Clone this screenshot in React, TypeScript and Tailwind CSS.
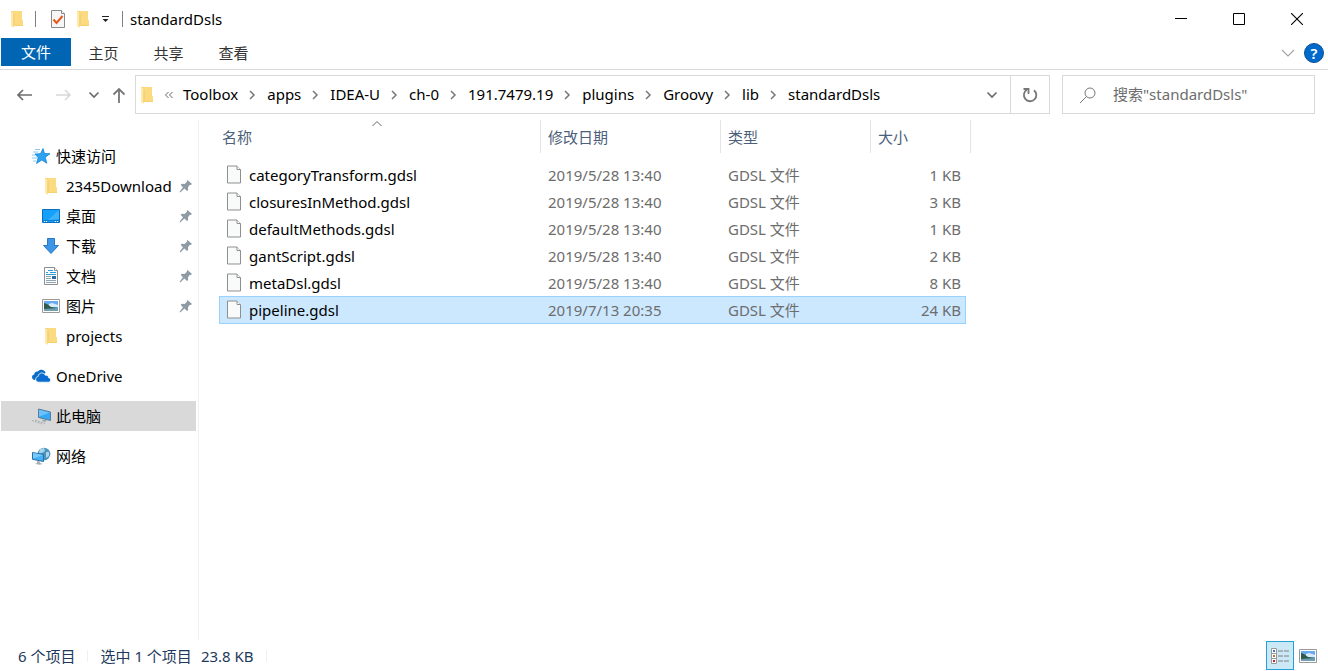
import { ReactNode } from 'react'
import clsx from 'clsx'

const FolderIcon = () => {
  return (
    <svg width="14" height="18" viewBox="0 0 14 18" className="shrink-0">
      <path d="M1 1h11v9l1 1v5H1z" fill="#f5d06c" />
      <path d="M4 1h8v9l1 1v4H4z" fill="#fbda80" />
      <path d="M1 1l3.500 2v12L3.500 18 1 16z" fill="#ffe8a8" />
      <path d="M4.500 3.500v11l-1 2.500V3z" fill="#eec25a" />
    </svg>
  )
}

const FileIcon = () => {
  return (
    <svg width="16" height="20" viewBox="0 0 16 20" className="shrink-0">
      <path d="M1.500 1h9.500l3.500 3.500v13.500h-13z" fill="#f9fafa" stroke="#8f8f8f" />
      <path d="M11 1v3.500h3.500" fill="#fff" stroke="#8f8f8f" />
    </svg>
  )
}

const CheckIcon = () => {
  return (
    <svg width="16" height="20" viewBox="0 0 16 20">
      <path d="M1.500 1.500h10l3 3v14h-13z" fill="#f6f6f6" stroke="#8a8a8a" />
      <path d="M11.500 1.500v3h3" fill="#fff" stroke="#8a8a8a" />
      <path d="M3.500 10.500l3 3.500L12.500 7" fill="none" stroke="#e8571c" strokeWidth="2" />
    </svg>
  )
}

const PinIcon = () => {
  return (
    <svg width="14" height="14" viewBox="0 0 14 14" className="shrink-0">
      <path
        d="M8.500 1l4.500 4-1.200 1-.9-.2L9 8.300l.2 2.700-1.200 1-2.600-2.400L1.300 13.400l-.7-.7L4 8.200 1.700 6l1-1.200 2.900.1L8 2.800 7.700 2z"
        fill="#8e9aa4"
      />
    </svg>
  )
}

const StarIcon = () => {
  return (
    <svg width="20" height="18" viewBox="0 0 20 18">
      <path
        d="M12 1.500l1.500 5 5.500.2-4.700 3.500 1.500 6-5-3.200-5.300 3.500 1.700-5.800-3.200-3.700 5.500-.3z"
        fill="#2ea3f2"
        stroke="#1583d1"
        strokeWidth=".8"
      />
      <path d="M4 2.500h5M2 5h5M1 8h3M1 11h5M2 14h3" stroke="#8cc8f3" />
    </svg>
  )
}

const DesktopIcon = () => {
  return (
    <svg width="18" height="14" viewBox="0 0 18 14">
      <path d="M.5.5h17v13H.5z" fill="#14a0fb" stroke="#0a6fc0" />
      <path d="M17 1v9L6 11z" fill="#3fb2fd" />
      <path d="M1 11.500h16" stroke="#0f7fd4" />
      <path d="M2 12.500h1M4 12.500h1M13 12.500h1M15 12.500h1" stroke="#fff" />
    </svg>
  )
}

const DownloadIcon = () => {
  return (
    <svg width="18" height="18" viewBox="0 0 18 18">
      <path d="M5.500 1.500h7v7h4L9 16.500 1.500 8.500h4z" fill="#3c95e6" stroke="#2b78c4" />
    </svg>
  )
}

const DocumentIcon = () => {
  return (
    <svg width="16" height="20" viewBox="0 0 16 20">
      <path d="M1.500 1.500h10l3 3v14h-13z" fill="#fdfdfd" stroke="#8d8d8d" />
      <path d="M11.500 1.500v3h3" fill="#fff" stroke="#8d8d8d" />
      <path d="M5 4.500h5M3 6.500h2M7 6.500h6M3 8.500h10" stroke="#2f9be0" />
      <path d="M3 10.500h5M3 12.500h5M3 14.500h10M3 16.500h10" stroke="#8ea3b3" />
      <path d="M9 10h4v3H9z" fill="#2c6ca4" />
    </svg>
  )
}

const PictureIcon = () => {
  return (
    <svg width="18" height="14" viewBox="0 0 18 14">
      <path d="M.5.5h17v13H.5z" fill="#fff" stroke="#9a9a9a" />
      <path d="M2 2h14v10H2z" fill="#6aaaf0" />
      <path d="M7 5l3-1 6 2v2H7z" fill="#d8ebfa" />
      <path d="M2 4l3 1 4 3 7 1v1H2z" fill="#2f5a4c" />
      <path d="M2 10l14-1v3H2z" fill="#6f9fb0" />
    </svg>
  )
}

const OneDriveIcon = () => {
  return (
    <svg width="20" height="14" viewBox="0 0 20 14">
      <path
        d="M3.500 11A3 3 0 0 1 1 8.200C1 6.500 2 5.600 3.300 5.400 3.500 3.300 5 2.300 6.800 2.600 8 .8 9.500.5 11 .7c1.900.3 3.100 1.500 3.500 3.300z"
        fill="#0a6cc4"
      />
      <path
        d="M8 13.200c-2 0-3.300-1.100-3.300-2.900 0-1.600 1-2.600 2.400-2.800C7.300 5.200 8.800 4 10.800 4c1.600 0 2.900.8 3.500 2.200 2-.3 3.300.9 3.300 2.500 1.300.3 2 1.100 2 2.300 0 1.300-.9 2.200-2.200 2.200z"
        fill="#0a6cd0"
        stroke="#fff"
        strokeWidth=".8"
      />
    </svg>
  )
}

const ComputerIcon = () => {
  return (
    <svg width="20" height="18" viewBox="0 0 20 18">
      <path d="M7.500 2l12 3v8.500l-12-3z" fill="#35a8f5" stroke="#5b7f99" />
      <path d="M8 2.800l10.500 2.900L8 9.500z" fill="#6cc3fb" />
      <path d="M12 12.500l4 1-2 1.500-3-1z" fill="#9aa5ad" />
      <path d="M1 13.500l10 3.500M4 13l10 3.500" stroke="#a5adb3" strokeDasharray="2 1" />
    </svg>
  )
}

const NetworkIcon = () => {
  return (
    <svg width="20" height="18" viewBox="0 0 20 18">
      <circle cx="13" cy="7" r="6.300" fill="#4d94bd" />
      <path d="M9 2l4-1 1 3-3 2-3 0zM15 5l3 0v4l-3 2z" fill="#a9d6e6" />
      <path d="M1.500 5.500l11 2v7l-11-2.200z" fill="#45b1f7" stroke="#2a6fa3" />
      <path d="M2 6l10 2-10 3.500z" fill="#78cafc" />
      <path d="M6 14l3 .6v1.400l3 1-4 .8-4-1 2-.8z" fill="#a7b0b6" />
    </svg>
  )
}

const ChevronRight = () => {
  return (
    <svg width="12" height="12" viewBox="0 0 12 12" className="mr-[9px] ml-2">
      <path d="M4 2l4 4-4 4" fill="none" stroke="#777" strokeWidth="1.500" />
    </svg>
  )
}

const ChevronDown = () => {
  return (
    <svg width="12" height="8" viewBox="0 0 12 8">
      <path d="M1.500 1.500L6 6l4.500-4.500" fill="none" stroke="#6d6d6d" strokeWidth="1.700" />
    </svg>
  )
}

const tabs = ['主页', '共享', '查看']

const crumbs = [
  'Toolbox',
  'apps',
  'IDEA-U',
  'ch-0',
  '191.7479.19',
  'plugins',
  'Groovy',
  'lib',
  'standardDsls'
]

const quickAccess = [
  { name: '2345Download', icon: <FolderIcon />, pinned: true },
  { name: '桌面', icon: <DesktopIcon />, pinned: true },
  { name: '下载', icon: <DownloadIcon />, pinned: true },
  { name: '文档', icon: <DocumentIcon />, pinned: true },
  { name: '图片', icon: <PictureIcon />, pinned: true },
  { name: 'projects', icon: <FolderIcon />, pinned: false }
]

const files = [
  { name: 'categoryTransform.gdsl', date: '2019/5/28 13:40', size: '1 KB' },
  { name: 'closuresInMethod.gdsl', date: '2019/5/28 13:40', size: '3 KB' },
  { name: 'defaultMethods.gdsl', date: '2019/5/28 13:40', size: '1 KB' },
  { name: 'gantScript.gdsl', date: '2019/5/28 13:40', size: '2 KB' },
  { name: 'metaDsl.gdsl', date: '2019/5/28 13:40', size: '8 KB' },
  { name: 'pipeline.gdsl', date: '2019/7/13 20:35', size: '24 KB', selected: true }
]

const TitleBar = () => {
  return (
    <header className="flex h-[38px] items-center pr-[2px] pl-[10px]">
      <FolderIcon />
      <div className="ml-[11px] h-4 w-px bg-[#808080]" />
      <button aria-label="属性" className="ml-[14px]">
        <CheckIcon />
      </button>
      <button aria-label="新建文件夹" className="ml-[10px]">
        <FolderIcon />
      </button>
      <button aria-label="自定义快速访问工具栏" className="ml-[11px]">
        <svg width="9" height="8" viewBox="0 0 9 8">
          <path d="M1 1.500h7" stroke="#222" />
          <path d="M1.500 4h6L4.500 7z" fill="#222" />
        </svg>
      </button>
      <div className="ml-3 h-4 w-px bg-[#808080]" />
      <h1 className="ml-[7px]">standardDsls</h1>
      <div className="ml-auto flex">
        <button aria-label="最小化" className="flex w-[58px] justify-center">
          <svg width="12" height="12" viewBox="0 0 12 12">
            <path d="M0 5.500h12" stroke="#000" />
          </svg>
        </button>
        <button aria-label="最大化" className="flex w-[58px] justify-center">
          <svg width="12" height="12" viewBox="0 0 12 12">
            <path d="M.5.5h11v11H.5z" fill="none" stroke="#000" />
          </svg>
        </button>
        <button aria-label="关闭" className="flex w-[58px] justify-center">
          <svg width="12" height="12" viewBox="0 0 12 12">
            <path d="M0 0l12 12M12 0L0 12" stroke="#000" strokeWidth="1.100" />
          </svg>
        </button>
      </div>
    </header>
  )
}

const Ribbon = () => {
  return (
    <nav className="flex h-8 items-start border-b border-[#dadbdc] pr-1 pl-px text-[#333]">
      <button className="h-7 w-[70px] bg-[#0066b4] text-white">文件</button>
      {tabs.map((tab) => (
        <button key={tab} className="h-[30px] w-[65px]">
          {tab}
        </button>
      ))}
      <div className="ml-auto flex h-[30px] items-center gap-[9px]">
        <button aria-label="展开功能区">
          <svg width="14" height="8" viewBox="0 0 14 8">
            <path d="M1 1l6 6 6-6" fill="none" stroke="#a6a6a6" strokeWidth="1.200" />
          </svg>
        </button>
        <button
          aria-label="帮助"
          className="flex size-5 items-center justify-center rounded-full border border-[#0b4f94] bg-[#0069cc] font-semibold text-white"
        >
          ?
        </button>
      </div>
    </nav>
  )
}

const AddressBar = () => {
  return (
    <div className="flex h-11 items-end pr-[13px] pl-4">
      <div className="flex h-[39px] w-[119px] shrink-0 items-center">
        <button aria-label="后退">
          <svg width="18" height="14" viewBox="0 0 18 14">
            <path d="M16 7H2M7 2L2 7l5 5" fill="none" stroke="#6d6d6d" strokeWidth="1.700" />
          </svg>
        </button>
        <button aria-label="前进" className="ml-5">
          <svg width="18" height="14" viewBox="0 0 18 14">
            <path d="M2 7h14M11 2l5 5-5 5" fill="none" stroke="#d8d8d8" strokeWidth="1.500" />
          </svg>
        </button>
        <button aria-label="最近浏览的位置" className="ml-4">
          <ChevronDown />
        </button>
        <button aria-label="上移" className="ml-3">
          <svg width="14" height="18" viewBox="0 0 14 18">
            <path d="M7 17V3M1.500 8.500L7 3l5.500 5.500" fill="none" stroke="#777" strokeWidth="1.800" />
          </svg>
        </button>
      </div>
      <div className="flex h-[39px] min-w-0 flex-1 items-center border border-[#d9d9d9] pl-1">
        <FolderIcon />
        <button aria-label="上级目录" className="mr-[10px] ml-[11px]">
          <svg width="8" height="8" viewBox="0 0 8 8">
            <path d="M3.500 1l-3 3 3 3M7.500 1l-3 3 3 3" fill="none" stroke="#666" />
          </svg>
        </button>
        {crumbs.map((crumb, i) => (
          <div key={crumb} className="flex items-center">
            <button className="pb-[2px]">{crumb}</button>
            {i < crumbs.length - 1 && <ChevronRight />}
          </div>
        ))}
        <button aria-label="以前的位置" className="mr-3 ml-auto">
          <ChevronDown />
        </button>
        <button
          aria-label="刷新"
          className="flex h-full w-[39px] items-center justify-center border-l border-[#d9d9d9]"
        >
          <svg width="16" height="16" viewBox="0 0 16 16">
            <path d="M12 3.200A6.200 6.200 0 1 1 4.800 2.800" fill="none" stroke="#777" strokeWidth="1.800" />
            <path d="M1.500 2h5v5" fill="none" stroke="#777" strokeWidth="1.800" />
          </svg>
        </button>
      </div>
      <label className="ml-3 flex h-[39px] w-[253px] items-center border border-[#d9d9d9] pl-4">
        <svg width="18" height="18" viewBox="0 0 18 18" className="shrink-0">
          <circle cx="11" cy="7" r="5" fill="none" stroke="#777" />
          <path d="M7.500 10.500L1 17" stroke="#777" />
        </svg>
        <input
          type="search"
          aria-label="搜索"
          placeholder={'搜索"standardDsls"'}
          className="ml-4 w-full min-w-0 pb-[2px] outline-none placeholder:text-[#6d6d6d]"
        />
      </label>
    </div>
  )
}

interface NavItemProps {
  icon: ReactNode
  name: string
  active?: boolean
}

const NavItem = ({ icon, name, active }: NavItemProps) => {
  return (
    <button
      className={clsx(
        'flex h-[30px] w-[195px] items-center pl-[30px] text-left',
        active && 'bg-[#d9d9d9]'
      )}
    >
      <span className="flex w-5 justify-center">{icon}</span>
      <span className="ml-[5px]">{name}</span>
    </button>
  )
}

const Sidebar = () => {
  return (
    <aside className="mt-[6px] flex w-[199px] shrink-0 flex-col gap-[10px] border-r border-[#f0f0f0] pt-[21px] pl-px">
      <div>
        <NavItem icon={<StarIcon />} name="快速访问" />
        {quickAccess.map(({ name, icon, pinned }) => (
          <button
            key={name}
            className="flex h-[30px] w-[195px] items-center pr-[3px] pl-10 text-left"
          >
            <span className="flex w-5 shrink-0 justify-center">{icon}</span>
            <span className="ml-[5px]">{name}</span>
            {pinned && (
              <span className="ml-auto">
                <PinIcon />
              </span>
            )}
          </button>
        ))}
      </div>
      <NavItem icon={<OneDriveIcon />} name="OneDrive" />
      <NavItem icon={<ComputerIcon />} name="此电脑" active />
      <NavItem icon={<NetworkIcon />} name="网络" />
    </aside>
  )
}

const FileList = () => {
  return (
    <main className="min-w-0 flex-1 pt-[6px] pl-5">
      <table className="w-[752px] table-fixed border-separate border-spacing-0 text-left">
        <colgroup>
          <col className="w-[322px]" />
          <col className="w-[180px]" />
          <col className="w-[150px]" />
          <col className="w-[95px]" />
          <col className="w-[5px]" />
        </colgroup>
        <thead className="text-[#4c607a]">
          <tr className="h-[33px]">
            <th className="relative border-r border-[#e5e5e5] p-0 pl-[3px] font-normal">
              <svg width="12" height="7" viewBox="0 0 12 7" className="absolute top-0 left-[152px]">
                <path d="M1.500 6L6 1.500 10.500 6" fill="none" stroke="#666" />
              </svg>
              <button>名称</button>
            </th>
            <th className="border-r border-[#e5e5e5] p-0 pl-[7px] font-normal">
              <button>修改日期</button>
            </th>
            <th className="border-r border-[#e5e5e5] p-0 pl-[7px] font-normal">
              <button>类型</button>
            </th>
            <th colSpan={2} className="border-r border-[#e5e5e5] p-0 pl-[7px] font-normal">
              <button>大小</button>
            </th>
          </tr>
        </thead>
        <tbody className="text-[#6d6d6d]">
          <tr className="h-2">
            <td colSpan={5} className="p-0" />
          </tr>
          {files.map(({ name, date, size, selected }) => {
            const cell = clsx(
              'border-y p-0',
              selected ? 'border-[#99d1ff] bg-[#cce8ff]' : 'border-transparent'
            )
            return (
              <tr key={name} className={clsx('leading-6', selected ? 'h-7' : 'h-[27px]')}>
                <td className={clsx(cell, 'border-l')}>
                  <div className="flex items-center pl-[6px] text-black">
                    <FileIcon />
                    <span className="ml-[7px]">{name}</span>
                  </div>
                </td>
                <td className={clsx(cell, 'pl-[7px]')}>{date}</td>
                <td className={clsx(cell, 'pl-[7px]')}>GDSL 文件</td>
                <td className={clsx(cell, 'border-r pr-1 text-right')}>{size}</td>
                <td className="p-0" />
              </tr>
            )
          })}
        </tbody>
      </table>
    </main>
  )
}

const StatusBar = () => {
  return (
    <footer className="flex h-[31px] items-center pr-[11px] pl-[18px] text-[#1e395b]">
      <span>6 个项目</span>
      <div className="mx-3 h-3 w-px bg-[#f0f0f0]" />
      <span>选中 1 个项目</span>
      <span className="ml-[9px]">23.8 KB</span>
      <div className="ml-3 h-3 w-px bg-[#f0f0f0]" />
      <button
        aria-label="详细信息"
        className="ml-auto flex h-[29px] w-7 items-center justify-center border border-[#26a0da] bg-[#cbe8f6]"
      >
        <svg width="18" height="18" viewBox="0 0 18 18">
          <path d="M.5 1.500h5v5h-5zM.5 6.500h5v5h-5zM.5 11.500h5v5h-5z" fill="#fff" stroke="#9a9a9a" />
          <path d="M2 3h2v2H2z" fill="#3a7bc0" />
          <path d="M2 8h2v2H2z" fill="#b0793c" />
          <path d="M2 13h2v2H2z" fill="#d02020" />
          <path d="M7 4h5M13 4h5M7 9h5M13 9h5M7 14h5M13 14h5" stroke="#808080" />
        </svg>
      </button>
      <button aria-label="大缩略图" className="ml-[5px]">
        <PictureIcon />
      </button>
    </footer>
  )
}

const App = () => {
  return (
    <div className="flex h-screen flex-col overflow-hidden bg-white font-['Noto_Sans','Noto_Sans_CJK_SC',sans-serif] text-[15px] leading-5 whitespace-nowrap text-black">
      <TitleBar />
      <Ribbon />
      <AddressBar />
      <div className="flex min-h-0 flex-1">
        <Sidebar />
        <FileList />
      </div>
      <StatusBar />
    </div>
  )
}

export default App
